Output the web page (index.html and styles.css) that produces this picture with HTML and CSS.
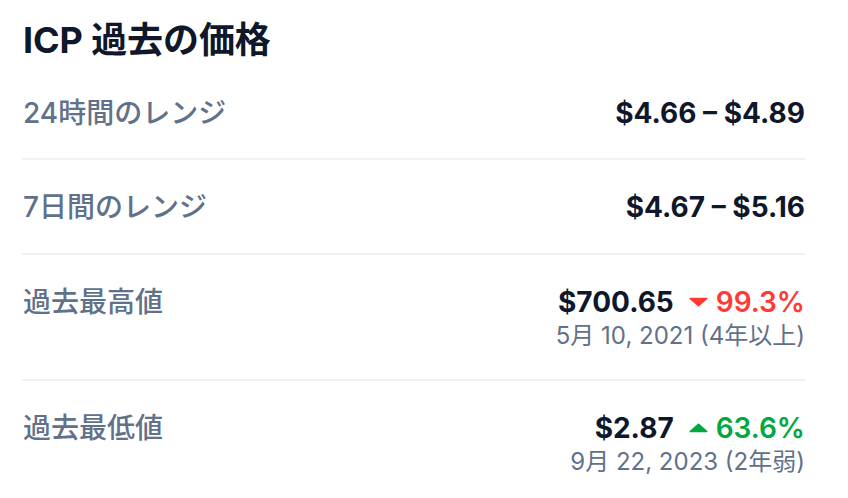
FILE: index.html
```html
<!DOCTYPE html>
<html lang="ja">
<head>
<meta charset="utf-8">
<link rel="stylesheet" href="styles.css">
</head>
<body>
<section class="card">
  <h2 class="title">ICP 過去の価格</h2>
  <div class="row">
    <div class="label">24時間のレンジ</div>
    <div class="val"><span class="price">$4.66 – $4.89</span></div>
  </div>
  <div class="row">
    <div class="label">7日間のレンジ</div>
    <div class="val"><span class="price">$4.67 – $5.16</span></div>
  </div>
  <div class="row">
    <div class="label">過去最高値</div>
    <div class="val">
      <div class="line">
        <span class="price">$700.65</span>
        <span class="chg down"><svg class="tri" viewBox="0 0 16 8"><path d="M1 0.5h14a0.6 0.6 0 0 1 0.45 1L8.5 7.6a0.7 0.7 0 0 1-1 0L0.55 1.5A0.6 0.6 0 0 1 1 0.5z"/></svg>99.3%</span>
      </div>
      <div class="sub">5月 10, 2021 (4年以上)</div>
    </div>
  </div>
  <div class="row last">
    <div class="label">過去最低値</div>
    <div class="val">
      <div class="line">
        <span class="price">$2.87</span>
        <span class="chg up"><svg class="tri" viewBox="0 0 16 8"><path d="M1 7.5h14a0.6 0.6 0 0 0 0.45-1L8.5 0.4a0.7 0.7 0 0 0-1 0L0.55 6.5A0.6 0.6 0 0 0 1 7.5z"/></svg>63.6%</span>
      </div>
      <div class="sub">9月 22, 2023 (2年弱)</div>
    </div>
  </div>
</section>
</body>
</html>
```
FILE: styles.css
```css
html, body {
  margin: 0;
  padding: 0;
  background: #ffffff;
}
body {
  font-family: Inter, "Noto Sans CJK JP", sans-serif;
  color: #0f172a;
}
.card {
  width: 783px;
  padding: 18px 0 0 22px;
}
.title {
  margin: 0 0 0 1px;
  font-size: 36px;
  line-height: 44px;
  font-weight: 700;
  color: #0f172a;
  letter-spacing: -0.1px;
}
.row {
  display: flex;
  justify-content: space-between;
  align-items: flex-start;
  padding: 29px 0 28px;
  border-bottom: 2px solid #eef2f6;
}
.row:first-of-type {
  padding-top: 33px;
  padding-bottom: 27px;
}
.row.last {
  border-bottom: none;
}
.label {
  margin-left: 1px;
  font-size: 28px;
  line-height: 36px;
  font-weight: 500;
  color: #61718a;
}
.val {
  display: flex;
  flex-direction: column;
  align-items: flex-end;
}
.line {
  display: flex;
  align-items: center;
  gap: 15px;
}
.price {
  font-size: 28px;
  line-height: 36px;
  font-weight: 700;
  color: #0f172a;
}
.chg {
  display: inline-flex;
  align-items: center;
  gap: 8px;
  font-size: 28px;
  line-height: 36px;
  font-weight: 600;
}
.tri {
  width: 19px;
  height: 10px;
  fill: currentColor;
}
.down { color: #ff3a33; }
.up { color: #00a83e; }
.sub {
  font-size: 24px;
  line-height: 31px;
  color: #61718a;
}
```
